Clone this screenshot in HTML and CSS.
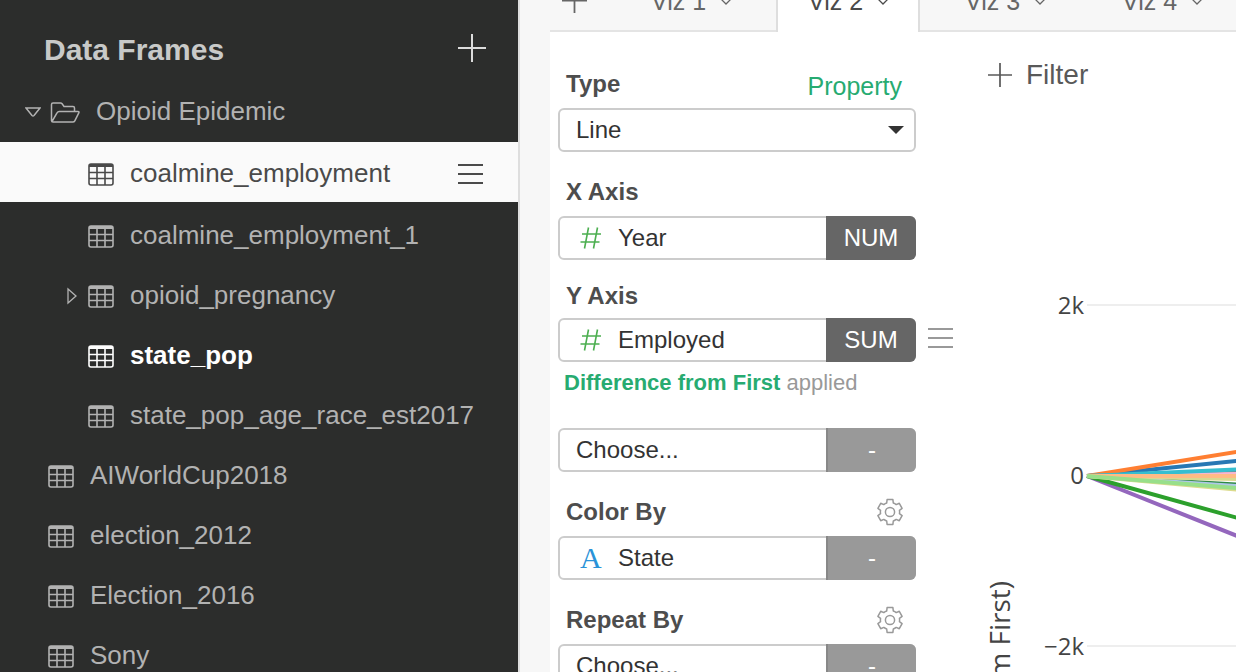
FILE: index.html
```html
<!DOCTYPE html>
<html lang="en">
<head>
<meta charset="utf-8">
<title>Data Frames</title>
<link rel="stylesheet" href="styles.css">
</head>
<body>
<svg class="defs" aria-hidden="true">
  <symbol id="table" viewBox="0 0 26 23">
    <rect x="1" y="1" width="24" height="21" rx="2" fill="none" stroke="currentColor" stroke-width="1.600"/>
    <path d="M1 1h24v3H1z" fill="currentColor"/>
    <path d="M1 9.500h24M1 15.500h24M9 3v19M17 3v19" fill="none" stroke="currentColor" stroke-width="1.600"/>
  </symbol>
  <symbol id="plus" viewBox="0 0 28 28">
    <path d="M14 0v28M0 14h28" fill="none" stroke="currentColor" stroke-width="2"/>
  </symbol>
  <symbol id="menu" viewBox="0 0 26 22">
    <path d="M0 2h25M0 11h25M0 20h25" fill="none" stroke="currentColor" stroke-width="2"/>
  </symbol>
  <symbol id="chevron" viewBox="0 0 14 8">
    <path d="M1 1l6 6 6-6" fill="none" stroke="currentColor" stroke-width="1.300"/>
  </symbol>
  <symbol id="hash" viewBox="0 0 22 22">
    <path d="M8.500 .5l-4 21M17.500 .5l-4 21M2 7h19M.5 15h19" fill="none" stroke="currentColor" stroke-width="1.600"/>
  </symbol>
  <symbol id="gear" viewBox="0 0 28 28">
    <path d="M11.100 1.600H16.900L17.300 5A9.600 9.600 0 0 1 20.200 6.600L23.300 5.300L26.100 10.300L23.450 12.300A9.600 9.600 0 0 1 23.450 15.700L26.100 17.700L23.300 22.700L20.200 21.400A9.600 9.600 0 0 1 17.300 23L16.900 26.400H11.100L10.700 23A9.600 9.600 0 0 1 7.800 21.400L4.700 22.700L1.900 17.700L4.550 15.700A9.600 9.600 0 0 1 4.550 12.300L1.900 10.300L4.700 5.300L7.800 6.600A9.600 9.600 0 0 1 10.700 5Z" fill="none" stroke="currentColor" stroke-width="1.500" stroke-linejoin="round"/>
    <circle cx="14" cy="14" r="4.600" fill="none" stroke="currentColor" stroke-width="1.500"/>
  </symbol>
</svg>

<aside class="sidebar">
  <header class="sidebar-head">
    <h1 class="sidebar-title">Data Frames</h1>
    <button class="icon-button" type="button" aria-label="Add data frame"><svg class="icon-plus"><use href="#plus"/></svg></button>
  </header>
  <ul class="tree">
    <li class="row folder">
      <svg class="caret-down" viewBox="0 0 16 10"><path d="M1 1h14L9 8.500q-1 1-2 0z" fill="none" stroke="currentColor" stroke-width="1.500"/></svg>
      <svg class="icon-folder" viewBox="0 0 30 22"><path d="M1.500 20V3.500Q1.500 2 3 2h7.500q1 0 1.600.8L14 5.500h9q1.500 0 1.500 1.500v3M2 20.500L7 12q.8-1.500 2.200-1.500H28q1.500 0 .8 1.300l-4 8q-.6 1.200-2 1.200H3q-1.500 0-1.500-1.500" fill="none" stroke="currentColor" stroke-width="1.500"/></svg>
      <span class="name">Opioid Epidemic</span>
    </li>
    <li class="row child selected"><svg class="icon-table"><use href="#table"/></svg><span class="name">coalmine_employment</span><button class="icon-button" type="button" aria-label="Data frame menu"><svg class="icon-menu"><use href="#menu"/></svg></button></li>
    <li class="row child"><svg class="icon-table"><use href="#table"/></svg><span class="name">coalmine_employment_1</span></li>
    <li class="row child expandable"><svg class="caret-right" viewBox="0 0 10 18"><path d="M1 2v14l8-7z" fill="none" stroke="currentColor" stroke-width="1.300"/></svg><svg class="icon-table"><use href="#table"/></svg><span class="name">opioid_pregnancy</span></li>
    <li class="row child current"><svg class="icon-table"><use href="#table"/></svg><span class="name">state_pop</span></li>
    <li class="row child"><svg class="icon-table"><use href="#table"/></svg><span class="name">state_pop_age_race_est2017</span></li>
    <li class="row"><svg class="icon-table"><use href="#table"/></svg><span class="name">AIWorldCup2018</span></li>
    <li class="row"><svg class="icon-table"><use href="#table"/></svg><span class="name">election_2012</span></li>
    <li class="row"><svg class="icon-table"><use href="#table"/></svg><span class="name">Election_2016</span></li>
    <li class="row"><svg class="icon-table"><use href="#table"/></svg><span class="name">Sony</span></li>
  </ul>
</aside>

<main class="workspace">
  <nav class="tabs">
    <button class="icon-button add-tab" type="button" aria-label="Add viz"><svg class="icon-plus-tab"><use href="#plus"/></svg></button>
    <button class="tab" type="button">Viz 1<svg class="chevron"><use href="#chevron"/></svg></button>
    <button class="tab active" type="button">Viz 2<svg class="chevron"><use href="#chevron"/></svg></button>
    <button class="tab" type="button">Viz 3<svg class="chevron"><use href="#chevron"/></svg></button>
    <button class="tab" type="button">Viz 4<svg class="chevron"><use href="#chevron"/></svg></button>
  </nav>
  <div class="content">
    <form class="settings">
      <div class="label-row first">
        <label for="type">Type</label>
        <a class="property" href="#property">Property</a>
      </div>
      <div class="field">
        <select class="choice" id="type"><option>Line</option></select>
        <svg class="arrow" viewBox="0 0 16 8"><path d="M0 0h16L8 8z" fill="currentColor"/></svg>
      </div>

      <div class="label-row"><label for="x-axis">X Axis</label></div>
      <div class="field">
        <svg class="type-icon number"><use href="#hash"/></svg>
        <select class="choice" id="x-axis"><option>Year</option></select>
        <button class="aggregate" type="button">NUM</button>
      </div>

      <div class="label-row tight"><label for="y-axis">Y Axis</label></div>
      <div class="field-line">
        <div class="field">
          <svg class="type-icon number"><use href="#hash"/></svg>
          <select class="choice" id="y-axis"><option>Employed</option></select>
          <button class="aggregate" type="button">SUM</button>
        </div>
        <button class="icon-button muted field-menu" type="button" aria-label="Y Axis menu"><svg class="icon-menu"><use href="#menu"/></svg></button>
      </div>
      <p class="note"><a class="note-link" href="#difference">Difference from First</a> applied</p>
      <div class="field">
        <select class="choice" aria-label="Second Y Axis column"><option>Choose...</option></select>
        <button class="aggregate none" type="button">-</button>
      </div>

      <div class="label-row"><label for="color-by">Color By</label><button class="icon-button muted" type="button" aria-label="Color settings"><svg class="icon-gear"><use href="#gear"/></svg></button></div>
      <div class="field">
        <span class="type-icon letter">A</span>
        <select class="choice" id="color-by"><option>State</option></select>
        <button class="aggregate none" type="button">-</button>
      </div>

      <div class="label-row"><label for="repeat-by">Repeat By</label><button class="icon-button muted" type="button" aria-label="Repeat settings"><svg class="icon-gear"><use href="#gear"/></svg></button></div>
      <div class="field">
        <select class="choice" id="repeat-by"><option>Choose...</option></select>
        <button class="aggregate none" type="button">-</button>
      </div>
    </form>

    <section class="viz">
      <button class="filter" type="button"><svg class="icon-plus-small"><use href="#plus"/></svg>Filter</button>
      <svg class="chart" role="img" aria-label="Employed, difference from first">
        <g class="grid"><path d="M107 193h2000M107 534h2000"/></g>
        <g class="series">
          <path stroke="#9467bd" d="M107 364L405 483"/>
          <path stroke="#2ca02c" d="M107 364L405 447"/>
          <path stroke="#2778b4" d="M107 364L405 334"/>
          <path stroke="#ff7f32" d="M107 364L405 316"/>
          <path stroke="#8c6d6d" d="M107 364L405 357"/>
          <path stroke="#f7b6d2" d="M107 364L405 360"/>
          <path stroke="#36becf" d="M107 364L405 351"/>
          <path stroke="#2e8b45" d="M107 364L405 381"/>
          <path stroke="#aec7e8" d="M107 364L405 384"/>
          <path stroke="#dbdb8d" d="M107 364L405 391"/>
          <path stroke="#d9d990" d="M107 364L405 370"/>
          <path stroke="#ffbb85" d="M107 364L405 364"/>
          <path stroke="#98df8a" d="M107 364L405 388"/>
        </g>
        <g class="ticks">
          <text x="104" y="202">2k</text>
          <text x="104" y="372">0</text>
          <text x="104" y="543">−2k</text>
        </g>
        <text class="axis-title" transform="translate(30 469) rotate(-90)">from First)</text>
      </svg>
    </section>
  </div>
</main>
</body>
</html>
```

FILE: styles.css
```css
* { box-sizing: border-box; }

body {
  margin: 0;
  height: 100vh;
  display: flex;
  overflow: hidden;
  font-family: "Liberation Sans", Arial, sans-serif;
  font-size: 24px;
  color: #333;
  background: #fff;
}

svg { display: block; flex: none; }
.defs { position: absolute; width: 0; height: 0; }

button, select { font: inherit; color: inherit; border: 0; background: none; margin: 0; padding: 0; }
.icon-button { display: flex; flex: none; }
a { text-decoration: none; }

/* Sidebar */
.sidebar {
  flex: none;
  width: 520px;
  overflow: hidden;
  background: #2c2d2c;
  border-right: 2px solid #dedede;
  color: #b2b2b2;
}
.sidebar-head {
  height: 80px;
  padding: 16px 32px 0 44px;
  display: flex;
  align-items: center;
  justify-content: space-between;
  color: #c8c9c8;
}
.sidebar-title { margin: 0; padding-top: 4px; font-size: 30px; line-height: 36px; }
.sidebar-head .icon-button { color: #dcdcdc; }
.icon-plus { width: 28px; height: 28px; }

.tree { list-style: none; margin: 0; padding: 0; font-size: 26px; }
.row {
  height: 60px;
  padding: 4px 34px 0 48px;
  display: flex;
  align-items: center;
  gap: 16px;
}
.row.child { padding-left: 88px; }
.row.folder { padding-left: 25px; gap: 9px; }
.row.folder .name { padding-left: 7px; }
.row.expandable { padding-left: 67px; gap: 16px; }
.row.expandable .caret-right { margin-right: -5px; }
.row.selected { margin: 2px 0; background: #fafafa; color: #4a4a4a; }
.row.current { color: #fff; font-weight: bold; }
.name { flex: 1; line-height: 32px; padding-bottom: 2px; }
.icon-table { width: 26px; height: 23px; }
.icon-folder { width: 30px; height: 22px; }
.icon-menu { width: 26px; height: 22px; }
.caret-down { width: 16px; height: 10px; }
.caret-right { width: 10px; height: 18px; }

/* Workspace */
.workspace {
  flex: 1;
  min-width: 0;
  margin-top: -30px;
  padding-left: 30px;
  display: flex;
  flex-direction: column;
  background: #f7f7f7;
}
.tabs { flex: none; height: 62px; display: flex; gap: 13px; overflow: hidden; box-shadow: inset 0 -2px #e4e4e4; }
.add-tab { width: 56px; padding: 18px 0 0 12px; color: #666; }
.icon-plus-tab { width: 25px; height: 25px; }
.tab {
  flex: none;
  width: 144px;
  padding: 0 0 0 30px;
  border: 2px solid transparent;
  border-width: 0 2px;
  display: flex;
  align-items: center;
  gap: 13px;
  font-size: 25px;
  color: #666;
}
.tab.active { background: #fff; border-color: #dedede; color: #4a4a4a; }
.chevron { width: 14px; height: 8px; }

.content { flex: 1; display: flex; background: #fff; min-height: 0; }

/* Settings column */
.settings { flex: none; width: 430px; padding: 0 64px 0 8px; }
.label-row {
  margin: 24px 12px 8px 8px;
  height: 32px;
  display: flex;
  align-items: center;
  justify-content: space-between;
  font-weight: bold;
  color: #4d4d4d;
}
.label-row.first { margin-top: 36px; margin-right: 14px; }
.label-row.tight { margin-top: 20px; margin-bottom: 6px; }
.property { padding-top: 4px; font-size: 25px; font-weight: normal; color: #27ab71; }
.field {
  flex: none;
  width: 100%;
  height: 44px;
  display: flex;
  align-items: stretch;
  border: 2px solid #ccc;
  border-radius: 6px;
  background: #fff;
}
.field-line { display: flex; align-items: center; gap: 12px; }
.field-menu { padding-bottom: 4px; }
.choice { flex: 1; min-width: 0; appearance: none; padding: 0 0 2px 16px; color: #333; }
.arrow { width: 16px; height: 8px; align-self: center; margin-right: 10px; color: #333; }
.type-icon { width: 22px; height: 22px; align-self: center; margin-left: 20px; }
.type-icon.number { color: #4caf50; }
.type-icon.letter { font: 30px/22px "Liberation Serif", serif; color: #2a93d8; }
.aggregate {
  flex: none;
  width: 90px;
  margin: -2px;
  border-radius: 0 6px 6px 0;
  background: #666;
  color: #fff;
}
.aggregate.none { background: #999; border-left: 2px solid #888; }
.muted { color: #999; }
.icon-gear { width: 28px; height: 28px; }
.note { margin: 6px 6px 30px; font-size: 22px; line-height: 30px; color: #999; }
.note-link { font-weight: bold; color: #27ab71; }

/* Chart */
.viz { flex: 1; min-width: 0; display: flex; flex-direction: column; }
.filter {
  flex: none;
  height: 80px;
  padding: 5px 0 0 8px;
  display: flex;
  align-items: center;
  gap: 14px;
  font-size: 28px;
  color: #595959;
}
.icon-plus-small { width: 24px; height: 24px; }
.chart { flex: 1; width: 100%; min-height: 0; overflow: hidden; font-family: "Open Sans", sans-serif; }
.grid { stroke: #eee; stroke-width: 2px; }
.series { fill: none; stroke-width: 4px; }
.ticks { font-size: 24px; text-anchor: end; fill: #444; }
.axis-title { font-size: 28px; text-anchor: end; fill: #444; }
```
